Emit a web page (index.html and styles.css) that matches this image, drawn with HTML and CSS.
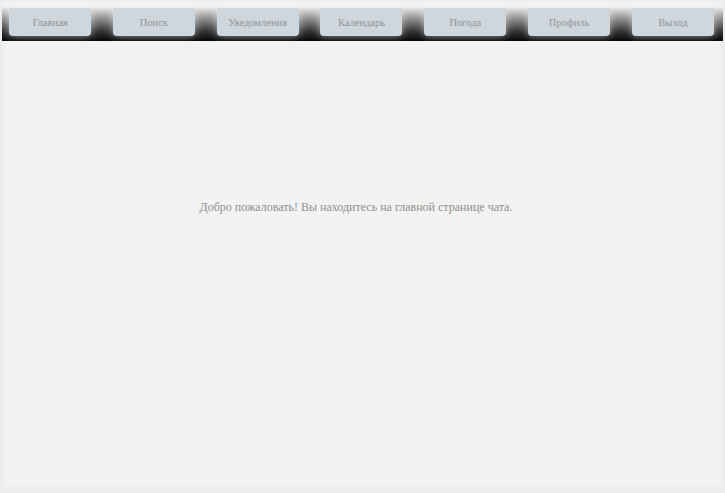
FILE: index.html
```html
<!DOCTYPE html>
<html lang="ru">
<head>
<meta charset="utf-8">
<title>Чат</title>
<link rel="stylesheet" href="styles.css">
</head>
<body>
<div class="page">
  <nav class="nav">
    <a class="btn" href="#">Главная</a>
    <a class="btn" href="#">Поиск</a>
    <a class="btn" href="#">Уведомления</a>
    <a class="btn" href="#">Календарь</a>
    <a class="btn" href="#">Погода</a>
    <a class="btn" href="#">Профиль</a>
    <a class="btn" href="#">Выход</a>
  </nav>
  <main class="content">
    <p class="welcome">Добро пожаловать! Вы находитесь на главной странице чата.</p>
  </main>
</div>
</body>
</html>
```
FILE: styles.css
```css
html, body {
  margin: 0;
  padding: 0;
  background: #ececec;
  font-family: "Liberation Serif", "Times New Roman", serif;
}
.page {
  margin: 0 2px;
  height: 488px;
  background: #f2f2f2;
  padding-top: 6px;
  box-sizing: border-box;
  display: flex;
  flex-direction: column;
  box-shadow: inset 0 0 3px #e6e6e6;
}
.nav {
  height: 35px;
  box-sizing: border-box;
  padding: 2px 9px 0 7px;
  display: flex;
  justify-content: space-between;
  align-items: flex-start;
  background: linear-gradient(to bottom, #f4f4f4 0%, #a0a0a0 30%, #3a3a3a 70%, #050505 100%);
}
.btn {
  width: 82px;
  height: 28px;
  display: flex;
  align-items: center;
  justify-content: center;
  background: #cfd6dc;
  border-radius: 2px 2px 4px 4px;
  color: #939393;
  font-size: 10.5px;
  text-decoration: none;
  box-shadow: 0 0 8px rgba(255, 255, 255, 0.55);
}
.content {
  flex: 1;
  display: flex;
  justify-content: center;
}
.welcome {
  margin: 159px 13px 0 0;
  color: #8f8f8f;
  font-size: 12px;
}
```
